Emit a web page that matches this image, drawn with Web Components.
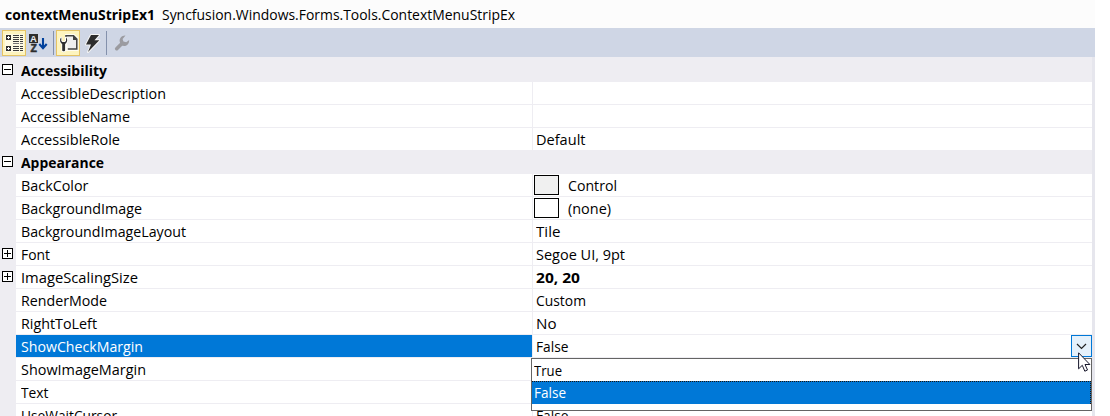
<!DOCTYPE html>
<html lang="en"><head><meta charset="utf-8"><title>Properties</title>
<style>
body{margin:0;background:#fff;overflow:hidden;height:416px;font:15px/22px "Open Sans","Noto Sans",sans-serif;color:#000}
</style></head><body>
<property-window></property-window>
<script>
const make=(name,html,ready)=>customElements.define(name,class extends HTMLElement{
  connectedCallback(){
    if(this.shadowRoot)return;
    const t=document.createElement('template');
    t.innerHTML=typeof html==='function'?html(this):html;
    this.attachShadow({mode:'open'}).append(t.content.cloneNode(true));
    if(ready)ready(this);
  }
});

/* Single-line label condensed to a given width */
make('fit-text','<style>:host{display:block;white-space:pre;height:22px}span{display:inline-block;transform-origin:0 50%}</style><span><slot></slot></span>',el=>{
  const s=el.shadowRoot.querySelector('span'),target=+el.getAttribute('w');
  const w=s.getBoundingClientRect().width;
  if(w)s.style.transform=`scaleX(${target/w})`;
  el.style.width=target+'px';
});

make('tool-button',`<style>
:host{display:block;box-sizing:border-box;width:24px;height:26px;border:1px solid transparent}
:host([active]){background:#fdf4bf;border-color:#e5c365}
::slotted(svg){display:block}
</style><slot></slot>`);
make('tool-separator','<style>:host{display:block;width:1px;height:24px;background:#8491ac}</style>');

make('tool-bar',`<style>
:host{display:flex;align-items:center;height:29px;background:#cfd6e5;padding-left:2px;box-sizing:border-box}
.a{margin:0 3px 0 3px}.b{margin:0 4px 0 2px}
svg{display:block}
</style>
<tool-button active><svg width="22" height="24" viewBox="3 30 22 24" shape-rendering="crispEdges">
<path fill="#fff" opacity=".55" d="M5 33h19v18H5z"/>
<path fill="#303030" d="M6 34h5v5h-5zM6 45h5v5h-5z"/><path stroke="#fff" d="M7 36.5h3M8.500 35v3M7 47.500h3M8.500 46v3"/>
<path stroke="#3c3c3c" d="M13 34.500h6M20 34.500h3M13 36.500h6M20 36.500h3M13 38.500h6M20 38.500h3M13 40.500h6M20 40.500h3M13 45.500h6M20 45.500h3M13 47.500h6M20 47.500h3M13 49.500h6M20 49.500h3"/><path stroke="#777" d="M13 42.500h6M20 42.500h3"/></svg></tool-button>
<tool-button><svg width="22" height="24" viewBox="27 30 22 24">
<path fill="#2d2d2d" d="M29 33h9v9h-9z"/><text x="33.500" y="41" text-anchor="middle" font-family="Liberation Sans" font-weight="bold" font-size="9.500" fill="#e8ebf2">A</text>
<text x="33.600" y="51" text-anchor="middle" font-family="Liberation Sans" font-weight="bold" font-size="10.500" fill="#2d2d2d" stroke="#2d2d2d" stroke-width=".5">Z</text>
<path fill="none" stroke="#00409c" stroke-width="2.100" d="M43 37v10M39.300 43l3.700 4.200l3.700-4.200"/></svg></tool-button>
<tool-separator class="a"></tool-separator>
<tool-button active style="margin-left:-1px"><svg width="22" height="24" viewBox="57 30 22 24">
<path fill="#fff" opacity=".8" d="M65 33h9.500l4 4v13H65z"/><path fill="#efefef" stroke="#424242" stroke-width="1.500" d="M66 36v-1.300h7.500l3.300 3.300v10h-9"/><path fill="#424242" d="M73 34v5h4.500z"/>
<path fill="#303030" stroke="#fff" stroke-width="1.600" paint-order="stroke" stroke-linejoin="round" d="M61.300 36.500c-1.600 1.200-1.900 4.600.9 6.400v6.300c0 1.500 2.900 1.500 2.900 0v-6.300c2.800-1.800 2.500-5.200.9-6.400v3.400l-1.100 1.200h-2.500l-1.100-1.200z"/></svg></tool-button>
<tool-button><svg width="22" height="24" viewBox="81 30 22 24">
<path fill="#2d2d2d" stroke="#f4f4f4" stroke-width="2" paint-order="stroke" stroke-linejoin="round" d="M91 34h8l-4.500 5.200h4.800L88 51l3-7.500h-5z"/></svg></tool-button>
<tool-separator class="b"></tool-separator>
<tool-button><svg width="22" height="24" viewBox="112 30 22 24">
<path fill="none" stroke="#9b9ba0" stroke-width="3.600" stroke-linecap="round" d="M116.700 47.700l5-5"/>
<path fill="#9b9ba0" d="M125.500 34.500c-3.500-.3-6.300 2.600-5.800 6 .4 3.200 3 5 5.500 4.400 2.500-.5 4-2.600 4-5.800l-3 2.100-2.800-.7-.8-2.600z"/></svg></tool-button>`);

make('expand-box',el=>`<style>:host{display:block;width:11px;height:11px}svg{display:block}</style>
<svg width="11" height="11" shape-rendering="crispEdges"><path fill="#fff" stroke="#000" d="M.5.5h10v10H.5z"/><path stroke="#000" d="M2 5.500h7${el.hasAttribute('open')?'':'M5.500 2v7'}"/></svg>`);

make('grid-category',`<style>
:host{display:grid;grid-template-columns:16px 1fr;height:23px;background:#eeedf2;font-weight:700}
expand-box{margin:5px 0 0 2px}::slotted(fit-text){margin:0 0 0 5px}
</style><expand-box open></expand-box><slot></slot>`);

make('property-row',el=>`<style>
:host{display:grid;grid-template-columns:16px 516px 1fr;height:23px}
.gutter{background:#eeedf2}
expand-box{margin:5px 0 0 2px}
.name,.value{box-sizing:border-box;border-bottom:1px solid #eeedf2;height:23px}
.name{padding-left:5px}
.value{border-left:1px solid #eeedf2;display:flex;padding-left:3px;position:relative}
:host([selected]) .name{background:#0078d7;background-clip:padding-box;color:#fff}
.swatch{box-sizing:border-box;width:25px;height:20px;border:1px solid #000;margin:1px 9px 0 -2px}
:host([selected]) .value{z-index:2}
</style><div class="gutter">${el.hasAttribute('expandable')?'<expand-box></expand-box>':''}</div>
<div class="name"><fit-text w="${el.getAttribute('nw')}">${el.getAttribute('name')}</fit-text></div>
<div class="value">${el.hasAttribute('swatch')?`<div class="swatch" style="background:${el.getAttribute('swatch')}"></div>`:''}<slot></slot></div>`);

make('drop-button',`<style>:host{display:block;box-sizing:border-box;width:21px;height:22px;border:1px solid #0078d7;background:#e5f1fb;margin:0 0 0 auto;position:relative;z-index:3}
svg{display:block}.cursor{position:absolute;left:6px;top:16px}</style>
<svg width="19" height="20"><path fill="none" stroke="#222" stroke-width="1.200" d="M5 8l4.500 4.500L14 8"/></svg>
<svg class="cursor" width="14" height="21" viewBox="0 0 14 21"><path fill="#fff" stroke="#16162a" stroke-width="1" d="M.6.8v16l3.700-3.500 2.500 5.900 2.700-1.200-2.500-5.500h4.900z"/></svg>`);

make('drop-list',`<style>
:host{display:block;position:absolute;left:-2px;top:23px;width:561px;height:53px;box-sizing:border-box;border:1px solid #646464;background:#fff}
.item{height:22px;padding-left:2px}
.sel{height:23px;box-sizing:border-box;background:#0078d7;color:#fff;border:1px dotted #20140c;border-left:0;border-bottom:0}
.sel fit-text{margin-top:-1px}
</style><div class="item"><fit-text w="28">True</fit-text></div><div class="item sel"><fit-text w="32">False</fit-text></div>`);

make('property-window',()=>{
const row=(n,nw,v='',vw=0,x='',extra='')=>`<property-row name="${n}" nw="${nw}" ${x}>${v?`<fit-text w="${vw}">${v}</fit-text>`:''}${extra}</property-row>`;
return `<style>
:host{display:block;width:1095px;height:416px;overflow:hidden}
header{height:28px;background:#fcfcfc;display:flex;gap:7px;padding-left:5px;box-sizing:border-box;padding-top:3px}
header b{font-weight:700}
main{box-sizing:border-box;height:359px;padding-top:2px;background:linear-gradient(#eeedf2 2px,#fff 2px);border-right:3px solid #e6e6ed}
</style>
<header><b><fit-text w="150">contextMenuStripEx1</fit-text></b><fit-text w="353">Syncfusion.Windows.Forms.Tools.ContextMenuStripEx</fit-text></header>
<tool-bar></tool-bar>
<main>
<grid-category><fit-text w="86">Accessibility</fit-text></grid-category>
${row('AccessibleDescription',145)}${row('AccessibleName',109)}${row('AccessibleRole',99,'Default',49.5)}
<grid-category><fit-text w="83">Appearance</fit-text></grid-category>
${row('BackColor',67.5,'Control',49,'swatch="#f0f0f0"')}
${row('BackgroundImage',121,'(none)',43,'swatch="#fff"')}
${row('BackgroundImageLayout',165,'Tile',24.5)}
${row('Font',29,'Segoe UI, 9pt',89,'expandable')}
${row('ImageScalingSize',117,'<b>20, 20</b>',44,'expandable')}
${row('RenderMode',86,'Custom',50)}
${row('RightToLeft',76,'No',20.5)}
${row('ShowCheckMargin',122,'False',32.5,'selected','<drop-button></drop-button><drop-list></drop-list>')}
${row('ShowImageMargin',125)}${row('Text',27.5)}${row('UseWaitCursor',96,'False',32.5)}
</main>`});
</script></body></html>
